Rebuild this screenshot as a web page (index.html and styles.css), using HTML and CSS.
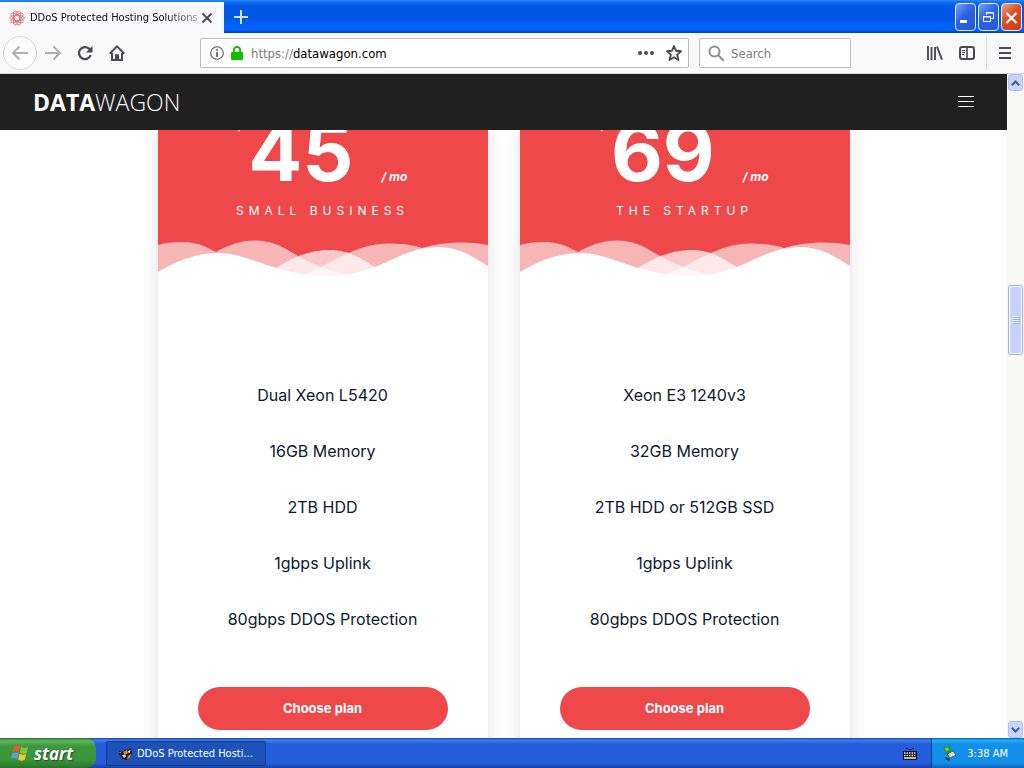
FILE: index.html
```html
<!DOCTYPE html>
<html lang="en">
<head>
  <meta charset="UTF-8">
  <title>DDoS Protected Hosting Solutions</title>
  <link rel="stylesheet" href="styles.css">
</head>
<body>

  <!-- title bar -->
  <div class="titlebar">
    <div class="tab">
      <svg class="favicon" width="16" height="16" viewBox="0 0 16 16" fill="none" stroke="#d2696e" stroke-width="0.8">
        <ellipse cx="8" cy="8" rx="7.3" ry="2.8"/>
        <ellipse cx="8" cy="8" rx="7.3" ry="2.8" transform="rotate(36 8 8)"/>
        <ellipse cx="8" cy="8" rx="7.3" ry="2.8" transform="rotate(72 8 8)"/>
        <ellipse cx="8" cy="8" rx="7.3" ry="2.8" transform="rotate(108 8 8)"/>
        <ellipse cx="8" cy="8" rx="7.3" ry="2.8" transform="rotate(144 8 8)"/>
      </svg>
      <span class="tab-title">DDoS Protected Hosting Solutions</span>
      <button type="button" class="icon-button" aria-label="Close tab">
        <svg width="12" height="12" viewBox="0 0 12 12" stroke="#4a4a4f" stroke-width="1.8"><path d="M1.5 1.5l9 9M10.5 1.5l-9 9"/></svg>
      </button>
    </div>
    <button type="button" class="icon-button new-tab" aria-label="New tab">
      <svg width="14" height="14" viewBox="0 0 14 14" stroke="#cfe2ff" stroke-width="2"><path d="M7 0v14M0 7h14"/></svg>
    </button>
    <div class="window-buttons">
      <button type="button" class="window-button" aria-label="Minimize">
        <svg width="19" height="24" viewBox="0 0 19 24"><rect x="4" y="15" width="7" height="3" fill="#fff"/></svg>
      </button>
      <button type="button" class="window-button" aria-label="Restore">
        <svg width="19" height="24" viewBox="0 0 19 24" fill="none" stroke="#fff"><path d="M7.5 10V7.500h7v6H12M7 8h8M4.500 11.500h7v5h-7zM4 12h8"/></svg>
      </button>
      <button type="button" class="window-button window-close" aria-label="Close">
        <svg width="19" height="24" viewBox="0 0 19 24" stroke="#fff" stroke-width="2.2"><path d="M4.500 8l10 10M14.500 8l-10 10"/></svg>
      </button>
    </div>
  </div>

  <!-- navigation bar -->
  <div class="toolbar">
    <button type="button" class="icon-button back" aria-label="Back">
      <svg width="18" height="16" viewBox="0 0 18 16" fill="none" stroke="#b0b0b2" stroke-width="2"><path d="M17 8H2M8.500 1.500L2 8l6.500 6.500"/></svg>
    </button>
    <button type="button" class="icon-button" aria-label="Forward">
      <svg width="18" height="16" viewBox="0 0 18 16" fill="none" stroke="#b0b0b2" stroke-width="2"><path d="M1 8h15M9.500 1.500L16 8l-6.500 6.500"/></svg>
    </button>
    <button type="button" class="icon-button" aria-label="Reload">
      <svg width="16" height="16" viewBox="0 0 16 16"><path d="M13.700 10A6 6 0 1 1 12 3.600l1.500 1.500" fill="none" stroke="#4a4a4f" stroke-width="2.200"/><path d="M15.500 1v6.500H9z" fill="#4a4a4f"/></svg>
    </button>
    <button type="button" class="icon-button" aria-label="Home">
      <svg width="16" height="16" viewBox="0 0 16 16" fill="none" stroke="#4a4a4f" stroke-width="2"><path d="M.7 8.700L8 1.400l7.300 7.300M3 8v7h10V8"/><path d="M6 15v-5h4v5" fill="#4a4a4f" stroke="none"/><path d="M6.700 15.500V10h2.600v5.500" stroke-width="1.400"/></svg>
    </button>
    <div class="url-box">
      <svg width="14" height="14" viewBox="0 0 14 14"><circle cx="7" cy="7" r="6.300" fill="none" stroke="#5a5a5e" stroke-width="1.100"/><path d="M6.200 3h1.700v1.700H6.200zM6.200 6h1.700v5H6.200z" fill="#5a5a5e"/></svg>
      <svg class="lock" width="12" height="14" viewBox="0 0 12 14"><rect y="6" width="12" height="8" rx="1" fill="#12bc00"/><path d="M2.800 7V4.200a3.200 3.200 0 0 1 6.400 0V7" fill="none" stroke="#12bc00" stroke-width="2"/></svg>
      <label for="url">https://</label>
      <input type="text" id="url" value="datawagon.com">
      <button type="button" class="icon-button" aria-label="Page actions">
        <svg width="16" height="4" viewBox="0 0 16 4" fill="#4a4a4f"><circle cx="2" cy="2" r="2"/><circle cx="8" cy="2" r="2"/><circle cx="14" cy="2" r="2"/></svg>
      </button>
      <button type="button" class="icon-button star" aria-label="Bookmark">
        <svg width="16" height="16" viewBox="0 0 16 16" fill="none" stroke="#4a4a4f" stroke-width="1.900" stroke-linejoin="round"><path d="M8 1l2 4.700 5 .5-3.800 3.400L12.400 15 8 12.200 3.600 15l1.200-5.400L1 6.200l5-.5z"/></svg>
      </button>
    </div>
    <div class="search-box">
      <svg width="17" height="17" viewBox="0 0 17 17" fill="none" stroke="#8f8f92" stroke-width="2"><circle cx="6.500" cy="6.500" r="5"/><path d="M10.300 10.300l5.500 5.500"/></svg>
      <input type="text" aria-label="Search" placeholder="Search">
    </div>
    <div class="toolbar-end">
      <button type="button" class="icon-button" aria-label="Library">
        <svg width="16" height="14" viewBox="0 0 16 14" stroke="#4a4a4f" stroke-width="1.900"><path d="M1 0v14M4.500 1v13M8 1v13M10 .7l5 13"/></svg>
      </button>
      <button type="button" class="icon-button" aria-label="Sidebars">
        <svg width="16" height="14" viewBox="0 0 16 14" fill="none" stroke="#4a4a4f"><rect x="1" y="1" width="14" height="12" rx="2" stroke-width="2"/><path d="M8 1v12" stroke-width="1.600"/><path d="M3 4.500h3M3 6.500h3M3 8.500h2"/></svg>
      </button>
      <button type="button" class="icon-button menu" aria-label="Menu">
        <svg width="12" height="12" viewBox="0 0 12 12" fill="#4a4a4f"><path d="M0 0h12v2H0zM0 5h12v2H0zM0 10h12v2H0z"/></svg>
      </button>
    </div>
  </div>

  <div class="viewport">
    <div class="page">
      <header class="site-header">
        <a href="#" class="logo"><b>DATA</b>WAGON</a>
        <button type="button" class="icon-button" aria-label="Open navigation">
          <svg width="16" height="12" viewBox="0 0 16 12" fill="#fff"><path d="M0 0h16v1H0zM0 5h16v1H0zM0 10h16v1H0z"/></svg>
        </button>
      </header>

      <main class="plans">
        <section class="plan">
          <div class="plan-head">
            <div class="price"><span class="currency">$</span><span class="amount">45</span><span class="period">/ mo</span></div>
            <h2>SMALL BUSINESS</h2>
            <svg class="waves" viewBox="0 0 330 40" fill="#fff">
              <path fill-opacity="0.600" d="M0 5C14 1 36 0 50 8L58 12C70 5 84 0 98 .5C120 1 132 12 142 17C156 25 172 31 196 36V40H0z"/>
              <path fill-opacity="0.700" d="M112 32C130 20 148 10 172 10C192 10 206 20 218 28L224 40H112z"/>
              <path fill-opacity="0.600" d="M142 37C180 20 200 3 232 3.500C246 4 256 5 264 8C280 3 306 0 330 5V40H142z"/>
              <path d="M0 32C20 20 40 13 60 13C92 13 118 36 170 36C222 36 240 7 280 7C300 7 314 16 330 26V40H0z"/>
            </svg>
          </div>
          <ul>
            <li>Dual Xeon L5420</li>
            <li>16GB Memory</li>
            <li>2TB HDD</li>
            <li>1gbps Uplink</li>
            <li>80gbps DDOS Protection</li>
          </ul>
          <a href="#" class="choose">Choose plan</a>
        </section>

        <section class="plan">
          <div class="plan-head">
            <div class="price"><span class="currency">$</span><span class="amount">69</span><span class="period">/ mo</span></div>
            <h2>THE STARTUP</h2>
            <svg class="waves" viewBox="0 0 330 40" fill="#fff">
              <path fill-opacity="0.600" d="M0 5C14 1 36 0 50 8L58 12C70 5 84 0 98 .5C120 1 132 12 142 17C156 25 172 31 196 36V40H0z"/>
              <path fill-opacity="0.700" d="M112 32C130 20 148 10 172 10C192 10 206 20 218 28L224 40H112z"/>
              <path fill-opacity="0.600" d="M142 37C180 20 200 3 232 3.500C246 4 256 5 264 8C280 3 306 0 330 5V40H142z"/>
              <path d="M0 32C20 20 40 13 60 13C92 13 118 36 170 36C222 36 240 7 280 7C300 7 314 16 330 26V40H0z"/>
            </svg>
          </div>
          <ul>
            <li>Xeon E3 1240v3</li>
            <li>32GB Memory</li>
            <li>2TB HDD or 512GB SSD</li>
            <li>1gbps Uplink</li>
            <li>80gbps DDOS Protection</li>
          </ul>
          <a href="#" class="choose">Choose plan</a>
        </section>
      </main>
    </div>

    <div class="scrollbar">
      <button type="button" class="scroll-button" aria-label="Scroll up">
        <svg width="9" height="6" viewBox="0 0 9 6" fill="none" stroke="#4d6185" stroke-width="2.200"><path d="M.8 5.200l3.700-3.700 3.700 3.700"/></svg>
      </button>
      <div class="scroll-space-top"></div>
      <div class="scroll-thumb">
        <svg width="8" height="8" viewBox="0 0 8 8" stroke="#eef4fe"><path d="M0 .5h7M0 2.500h7M0 4.500h7M0 6.500h7"/><path stroke="#8cb0f8" d="M1 1.500h7M1 3.500h7M1 5.500h7M1 7.500h7"/></svg>
      </div>
      <div class="scroll-space-bottom"></div>
      <button type="button" class="scroll-button" aria-label="Scroll down">
        <svg width="9" height="6" viewBox="0 0 9 6" fill="none" stroke="#4d6185" stroke-width="2.200"><path d="M.8 .8l3.700 3.700L8.200 .8"/></svg>
      </button>
    </div>
  </div>

  <!-- taskbar -->
  <div class="taskbar">
    <button type="button" class="start">
      <svg width="18" height="18" viewBox="0 0 18 18">
        <path fill="#f0562a" d="M3 2.500C5 1 7 1 9 2.500L7.700 8.300C5.700 7 3.700 7 1.700 8.300z"/>
        <path fill="#86c440" d="M10 3c2 1.300 4.500 1.300 7 0l-1.500 6c-2.200 1.200-4.500 1-6.700-.3z"/>
        <path fill="#5a9cf0" d="M1.500 9.300c2-1.300 4-1.300 6 0L6.200 15C4.200 13.700 2.200 13.700 0 15z"/>
        <path fill="#fcc72c" d="M8.500 9.800c2.200 1.300 4.400 1.500 6.700.3l-1.500 5.700c-2.200 1.300-4.500 1.200-6.500-.2z"/>
      </svg>
      <span>start</span>
    </button>
    <button type="button" class="task">
      <svg width="15" height="14" viewBox="0 0 15 14">
        <path fill="#2b211c" d="M1 4l3 1 4-3 2 1 3-2 1 5-2 5-4 2-4-1-1-3-2-1z"/>
        <path fill="#c98a4a" d="M5 5l4-2 1 3-3 2zM10 9l3-2-1 4-3 1z"/>
        <path fill="#e8e0d4" d="M4 8l3-.5 1 2-2 1.500zM10 4l2.500-1-.5 2.500-1.500.5zM1 5l2 .500-.5 1z"/>
      </svg>
      <span>DDoS Protected Hosti...</span>
    </button>
    <div class="language">
      <svg width="14" height="13" viewBox="0 0 14 13"><path fill="none" stroke="#14204a" d="M3 1.500h2l1 1h2l1-1h2"/><rect y="4" width="14" height="9" fill="#111"/><path stroke="#f4f0e4" stroke-width="1.500" stroke-dasharray="1.500 1" d="M1 6h12M1 8.500h12"/><path stroke="#f4f0e4" stroke-width="1.500" d="M1 11h12"/></svg>
    </div>
    <div class="tray">
      <svg width="15" height="15" viewBox="0 0 15 15"><path fill="#26962f" d="M1 1l6-1 2 4-1 3-4 1z"/><path fill="#7ed659" d="M3 2l3-.5 1 2.500-3 1z"/><path fill="#d9dfd4" stroke="#4a5a5a" d="M5 8l6-3 3 4-6 3z"/><path fill="#345" d="M4 11l4 1.500L7 15l-4-2z"/></svg>
      <span>3:38 AM</span>
    </div>
  </div>

</body>
</html>
```
FILE: styles.css
```css
* {
  box-sizing: border-box;
}

body {
  margin: 0;
  height: 100vh;
  display: flex;
  flex-direction: column;
  overflow: hidden;
  background: #fff;
  font-family: "DejaVu Sans Condensed", Tahoma, sans-serif;
  font-size: 11px;
}

button {
  font: inherit;
  border: none;
  padding: 0;
  background: none;
}

input {
  font: inherit;
  border: none;
  padding: 0;
  min-width: 0;
  flex: 1;
  background: none;
  outline: none;
}

svg {
  display: block;
  flex: none;
}

.icon-button {
  display: flex;
  align-items: center;
  justify-content: center;
}

/* title bar */
.titlebar {
  display: flex;
  flex: none;
  height: 33px;
  background: linear-gradient(#2f86f8 0, #1272f4 2px, #0058e6 6px, #0055e5 18px, #0064fa 26px, #0062f8 30px, #003cc0 33px);
}

.tab {
  display: flex;
  align-items: center;
  width: 224px;
  margin-top: 2px;
  padding: 0 11px 0 9px;
  background: #f9f9fb;
}

.tab-title {
  flex: 1;
  margin-left: 5px;
  white-space: nowrap;
  color: #0c0c0d;
  -webkit-mask-image: linear-gradient(to right, #000 80%, rgba(0, 0, 0, 0.4));
  mask-image: linear-gradient(to right, #000 80%, rgba(0, 0, 0, 0.4));
}

.tab .icon-button {
  margin-left: 3px;
}

.new-tab {
  width: 34px;
}

.window-buttons {
  display: flex;
  align-items: center;
  gap: 2px;
  margin-left: auto;
  padding-right: 2px;
}

.window-button {
  width: 21px;
  height: 28px;
  border: 1px solid #e4ecfc;
  border-radius: 4px;
  background: linear-gradient(135deg, #7ba2f4, #2b62e0 45%, #2458dc);
}

.window-close {
  background: linear-gradient(135deg, #f0a28c, #dc4c26 45%, #c83c14);
}

/* toolbar */
.toolbar {
  display: flex;
  flex: none;
  align-items: center;
  height: 41px;
  padding: 0 13px 0 3px;
  background: #f9f9fa;
  border-bottom: 1px solid #dcdcdc;
}

.toolbar > .icon-button {
  width: 32px;
}

.toolbar > .back {
  width: 34px;
  height: 34px;
  border: 1px solid #d6d6d8;
  border-radius: 50%;
  background: #fcfcfc;
}

.url-box,
.search-box {
  display: flex;
  align-items: center;
  height: 30px;
  border: 1px solid #bdbdbf;
  border-radius: 2px;
  background: #fff;
  font-size: 13px;
}

.url-box {
  flex: 1;
  margin-left: 67px;
  padding: 0 6px 0 9px;
  color: #0c0c0d;
}

.url-box label {
  margin-left: 8px;
  color: #7c7c80;
}

.lock {
  margin-left: 7px;
}

.star {
  margin-left: 12px;
}

.search-box {
  width: 152px;
  margin-left: 10px;
  padding: 0 8px;
  gap: 6px;
}

.search-box input::placeholder {
  color: #7c7c80;
  opacity: 1;
}

.toolbar-end {
  display: flex;
  align-items: center;
  gap: 16px;
  margin-left: 76px;
}

.menu {
  height: 34px;
  padding-left: 12px;
  margin-left: -5px;
  border-left: 1px solid #dededf;
}

/* web page */
.viewport {
  display: flex;
  flex: 1;
  min-height: 0;
}

.page {
  flex: 1;
  min-width: 0;
  overflow: hidden;
  font-family: Inter, "Liberation Sans", sans-serif;
}

.site-header {
  display: flex;
  align-items: center;
  justify-content: space-between;
  height: 56px;
  padding: 0 33px;
  background: #202020;
}

.logo {
  color: #fff;
  font-family: "Open Sans", sans-serif;
  font-size: 23px;
  font-weight: 300;
  text-decoration: none;
}

.logo b {
  font-weight: 700;
}

.plans {
  display: flex;
  justify-content: center;
  gap: 32px;
  overflow: hidden;
}

.plan {
  width: 330px;
  padding-bottom: 40px;
  text-align: center;
  background: #fff;
  box-shadow: 0 0 14px rgba(20, 30, 60, 0.14);
}

.plan-head {
  background: #ee484a;
  color: #fff;
}

.price {
  display: flex;
  justify-content: center;
  align-items: baseline;
  height: 46px;
  line-height: 44px;
  font-weight: 700;
}

.currency {
  align-self: flex-start;
  margin: -28px 4px 0 0;
  font-size: 16px;
}

.amount {
  font-size: 80px;
}

.period {
  margin: 0 4px 0 28px;
  font-size: 12px;
  font-style: italic;
}

.plan h2 {
  margin: 25px 0 19px;
  font-size: 12px;
  line-height: 20px;
  font-weight: 400;
  letter-spacing: 5px;
}

.waves {
  width: 100%;
}

.plan ul {
  margin: 87px 0 0;
  padding: 0;
  list-style: none;
}

.plan li {
  padding: 16px 0;
  color: #0c1a30;
  font-size: 16px;
  line-height: 24px;
}

.choose {
  display: block;
  margin: 40px 40px 0;
  border-radius: 22px;
  background: #ee484a;
  color: #fff;
  font-size: 13px;
  font-weight: 700;
  line-height: 43px;
  text-decoration: none;
}

/* scrollbar */
.scrollbar {
  display: flex;
  flex-direction: column;
  width: 17px;
  background: #f9f9f4;
}

.scroll-button {
  display: flex;
  align-items: center;
  justify-content: center;
  height: 17px;
  margin: 0 1px;
  border: 1px solid #aebfee;
  border-radius: 3px;
  background: #c9d6fc;
}

.scroll-space-top {
  flex: 194;
}

.scroll-space-bottom {
  flex: 366;
}

.scroll-thumb {
  display: flex;
  align-items: center;
  justify-content: center;
  height: 70px;
  margin: 0 1px;
  border: 1px solid #98b4dc;
  border-radius: 3px;
  background: #c6d2fb;
  box-shadow: inset 0 0 0 1px #fff;
}

/* taskbar */
.taskbar {
  display: flex;
  flex: none;
  align-items: stretch;
  height: 30px;
  color: #fff;
  background: linear-gradient(#1941a5 0, #3a80f2 2px, #245edb 6px, #245edc 25px, #1941a5 30px);
}

.start {
  display: flex;
  align-items: center;
  gap: 5px;
  width: 96px;
  padding-left: 11px;
  color: #fff;
  font-family: "Open Sans", sans-serif;
  font-size: 17px;
  font-style: italic;
  font-weight: 700;
  text-shadow: 1px 1px 2px #1c4a1c;
  border-radius: 0 10px 10px 0;
  background: linear-gradient(#2c7a2c 0, #62b662 3px, #3c983c 8px, #3a973a 22px, #2a732a 30px);
}

.task {
  display: flex;
  align-items: center;
  gap: 4px;
  width: 160px;
  margin: 3px 0 2px 10px;
  padding-left: 11px;
  color: #fff;
  border: 1px solid #153c94;
  border-radius: 2px;
  background: #1e52b7;
}

.language {
  display: flex;
  align-items: center;
  margin-left: auto;
  padding-right: 14px;
}

.tray {
  display: flex;
  align-items: center;
  gap: 10px;
  padding: 0 16px 0 10px;
  border-left: 1px solid #0c3c90;
  background: linear-gradient(#0c59b9 0, #22b0f4 2px, #1290e9 6px, #1290e9 25px, #0f62ba 30px);
}
```
